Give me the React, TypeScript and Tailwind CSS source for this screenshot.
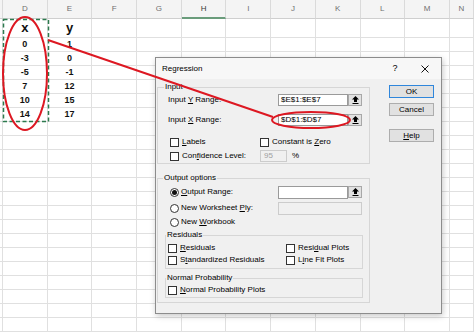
import React from 'react';

const COLS = ['', 'D', 'E', 'F', 'G', 'H', 'I', 'J', 'K', 'L', 'M', 'N'];
const DATA: Record<string, string[]> = {
  D: ['x', '0', '-3', '-5', '7', '10', '14'],
  E: ['y', '1', '0', '-1', '12', '15', '17'],
};

function Sheet() {
  const rows = Array.from({ length: 23 }, (_, i) => i);
  return (
    <div className="grid grid-cols-[3px_repeat(10,44.7px)_1fr] font-['Liberation_Sans',Arial,sans-serif]">
      {rows.map((r) =>
        COLS.map((c, ci) => {
          const h = r <= 1 ? 'h-[19px]' : 'h-[14px]';
          if (r === 0) {
            return (
              <div
                key={`${r}-${ci}`}
                className={`${h} bg-[#f4f4f4] border-r border-[#dadada] flex items-center justify-center text-[8px] ${
                  c === 'H' ? 'border-b-2 border-b-[#6a9c7b] text-[#3a3a3a]' : 'border-b border-b-[#cfcfcf] text-[#707070]'
                }`}
              >
                {c}
              </div>
            );
          }
          const v = DATA[c]?.[r - 1];
          return (
            <div
              key={`${r}-${ci}`}
              className={`${h} border-r border-b border-[#e0e0e0] flex items-center justify-center font-bold text-[#111] ${
                r === 1 ? 'text-[13px]' : 'text-[9px]'
              }`}
            >
              {v}
            </div>
          );
        })
      )}
    </div>
  );
}

function U({ children }: { children: React.ReactNode }) {
  return <span className="underline underline-offset-[1px]">{children}</span>;
}

function Box() {
  return <span className="w-[9px] h-[9px] border border-[#333] bg-white shrink-0" />;
}

function Radio({ on }: { on?: boolean }) {
  return (
    <span className="w-[9px] h-[9px] rounded-full border border-[#333] bg-white shrink-0 flex items-center justify-center">
      {on && <span className="w-[5px] h-[5px] rounded-full bg-[#111]" />}
    </span>
  );
}

function ArrowBtn() {
  return (
    <span className="w-[14px] h-[12px] border border-[#a8a8a8] bg-[#e1e1e1] flex items-center justify-center shrink-0">
      <svg width="7" height="8" viewBox="0 0 7 8">
        <path d="M3.5 0 L7 3.5 L5 3.5 L5 6 L2 6 L2 3.5 L0 3.5 Z" fill="#000" />
        <rect x="0.5" y="7" width="6" height="1" fill="#000" />
      </svg>
    </span>
  );
}

function Field({ value, w }: { value: string; w: string }) {
  return (
    <span className={`${w} h-[12px] border border-[#9a9a9a] bg-white flex items-center pl-[2px] text-[8px] shrink-0`}>
      {value}
    </span>
  );
}

function Dialog() {
  return (
    <div className="absolute left-[155px] top-[57px] w-[287px] h-[257px] bg-[#f0f0f0] border border-[#8c8c8c] shadow-[1px_2px_6px_rgba(0,0,0,0.22)] font-['Liberation_Sans',Arial,sans-serif] text-[8px] text-black leading-none">
      <div className="h-[21px] flex items-center bg-[#f7f7f7]">
        <span className="pl-[6px] text-[8px]">Regression</span>
        <span className="ml-auto w-[10px] text-center text-[9px]">?</span>
        <span className="ml-[20px] mr-[11px] w-[10px] flex items-center justify-center">
          <svg width="8" height="8" viewBox="0 0 8 8">
            <path d="M0.5 0.5 L7.5 7.5 M7.5 0.5 L0.5 7.5" stroke="#111" strokeWidth="1" />
          </svg>
        </span>
      </div>
      <div className="flex">
        <div className="w-[216px] pl-[1px]">
          <fieldset className="mt-[3px] w-[213px] border border-[#d6d6d6]">
            <legend className="ml-[6px] px-[1px] h-[10px] leading-[10px]">Input</legend>
            <div className="mt-[1px] h-[14px] flex items-center pl-[10px]">
              <span className="w-[110px]">
                Input <U>Y</U> Range:
              </span>
              <Field value="$E$1:$E$7" w="w-[70px]" />
              <ArrowBtn />
            </div>
            <div className="mt-[6px] h-[14px] flex items-center pl-[10px]">
              <span className="w-[110px]">
                Input <U>X</U> Range:
              </span>
              <Field value="$D$1:$D$7" w="w-[70px]" />
              <ArrowBtn />
            </div>
            <div className="mt-[8px] h-[14px] flex items-center pl-[12px]">
              <span className="w-[90px] flex items-center gap-[3px]">
                <Box />
                <span>
                  <U>L</U>abels
                </span>
              </span>
              <span className="flex items-center gap-[3px]">
                <Box />
                <span>
                  Constant is <U>Z</U>ero
                </span>
              </span>
            </div>
            <div className="h-[14px] flex items-center pl-[12px]">
              <span className="w-[90px] flex items-center gap-[3px]">
                <Box />
                <span>
                  Con<U>f</U>idence Level:
                </span>
              </span>
              <span className="w-[27px] h-[12px] border border-[#cccccc] bg-[#f0f0f0] text-[#a0a0a0] flex items-center pl-[3px]">
                95
              </span>
              <span className="ml-[5px]">%</span>
            </div>
          </fieldset>

          <fieldset className="mt-[9px] w-[213px] border border-[#d6d6d6] pb-[4px]">
            <legend className="ml-[5px] px-[1px] h-[10px] leading-[10px]">Output options</legend>
            <div className="mt-[2px] h-[14px] flex items-center pl-[12px]">
              <span className="w-[108px] flex items-center gap-[2px]">
                <Radio on />
                <span>
                  <U>O</U>utput Range:
                </span>
              </span>
              <span className="w-[70px] h-[13px] border border-[#9a9a9a] bg-white shrink-0" />
              <span className="h-[13px] flex items-center">
                <ArrowBtn />
              </span>
            </div>
            <div className="mt-[2px] h-[14px] flex items-center pl-[12px]">
              <span className="w-[108px] flex items-center gap-[2px]">
                <Radio />
                <span>
                  New Worksheet <U>P</U>ly:
                </span>
              </span>
              <span className="w-[84px] h-[13px] border border-[#cccccc] bg-[#f0f0f0] shrink-0" />
            </div>
            <div className="h-[14px] flex items-center pl-[12px]">
              <span className="flex items-center gap-[2px]">
                <Radio />
                <span>
                  New <U>W</U>orkbook
                </span>
              </span>
            </div>

            <fieldset className="mt-[1px] ml-[7px] mr-[6px] border border-[#d6d6d6] pb-[2px]">
              <legend className="ml-0 px-[1px] h-[10px] leading-[10px]">Residuals</legend>
              <div className="mt-[2px] h-[12px] flex items-center pl-[2px]">
                <span className="w-[118px] flex items-center gap-[3px]">
                  <Box />
                  <span>
                    <U>R</U>esiduals
                  </span>
                </span>
                <span className="flex items-center gap-[3px]">
                  <Box />
                  <span>
                    Resi<U>d</U>ual Plots
                  </span>
                </span>
              </div>
              <div className="h-[12px] flex items-center pl-[2px]">
                <span className="w-[118px] flex items-center gap-[3px]">
                  <Box />
                  <span>
                    S<U>t</U>andardized Residuals
                  </span>
                </span>
                <span className="flex items-center gap-[3px]">
                  <Box />
                  <span>
                    L<U>i</U>ne Fit Plots
                  </span>
                </span>
              </div>
            </fieldset>

            <fieldset className="mt-[4px] ml-[7px] mr-[6px] border border-[#d6d6d6] pb-[1px]">
              <legend className="ml-0 px-[1px] h-[10px] leading-[10px]">Normal Probability</legend>
              <div className="mt-[1px] h-[12px] flex items-center pl-[2px]">
                <span className="flex items-center gap-[3px]">
                  <Box />
                  <span>
                    <U>N</U>ormal Probability Plots
                  </span>
                </span>
              </div>
            </fieldset>
          </fieldset>
        </div>

        <div className="ml-[17px] flex flex-col">
          <button className="mt-[6px] w-[45px] h-[13px] border border-[#2f86db] bg-[#e1e1e1] text-[8px] leading-none">
            OK
          </button>
          <button className="mt-[5px] w-[45px] h-[13px] border border-[#adadad] bg-[#e1e1e1] text-[8px] leading-none">
            Cancel
          </button>
          <button className="mt-[13px] w-[45px] h-[13px] border border-[#adadad] bg-[#e1e1e1] text-[8px] leading-none">
            <U>H</U>elp
          </button>
        </div>
      </div>
    </div>
  );
}

export default function App() {
  return (
    <div className="relative w-[474px] h-[332px] overflow-hidden bg-white">
      <Sheet />
      <svg className="absolute left-0 top-0 pointer-events-none" width="474" height="332" viewBox="0 0 474 332">
        <rect x="3.5" y="19.5" width="45" height="102" fill="none" stroke="#2c7a4e" strokeWidth="1.5" strokeDasharray="4 2.5" />
        <ellipse cx="25" cy="73.5" rx="22" ry="56.5" fill="none" stroke="#dd1822" strokeWidth="2" />
      </svg>
      <Dialog />
      <svg className="absolute left-0 top-0 pointer-events-none" width="474" height="332" viewBox="0 0 474 332">
        <line x1="48" y1="40" x2="273" y2="117" stroke="#dd1822" strokeWidth="2" />
        <ellipse cx="311" cy="120" rx="39" ry="8" fill="none" stroke="#dd1822" strokeWidth="2" />
      </svg>
    </div>
  );
}
